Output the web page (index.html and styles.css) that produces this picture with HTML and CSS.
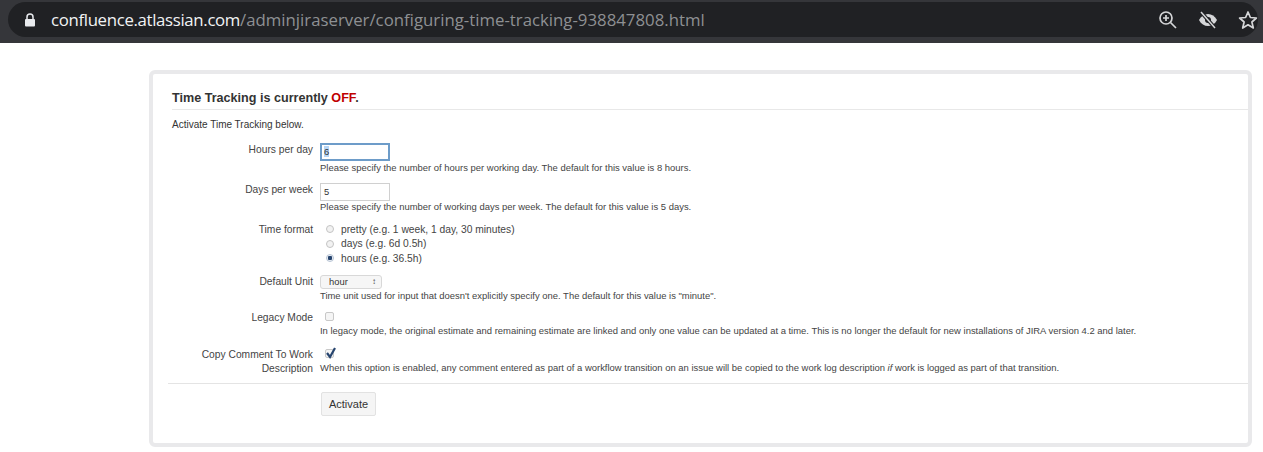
FILE: index.html
```html
<!DOCTYPE html>
<html lang="en">
<head>
    <meta charset="UTF-8">
    <title>Configuring time tracking</title>
    <link rel="stylesheet" href="styles.css">
</head>
<body>
    <div class="address-bar">
        <div class="address-pill">
            <svg class="lock" width="12" height="14" viewBox="0 0 12 14">
                <path d="M3 6V4a3 3 0 0 1 6 0v2" fill="none" stroke="#e8eaed" stroke-width="1.5"/>
                <rect x="1" y="6" width="10" height="7.5" rx="1" fill="#e8eaed"/>
            </svg>
            <span class="url"><span class="host">confluence.atlassian.com</span>/adminjiraserver/configuring-time-tracking-938847808.html</span>
            <div class="bar-icons">
                <svg width="20" height="20" viewBox="0 0 20 20" fill="none" stroke="#d5d6d8" stroke-width="1.7">
                    <circle cx="8" cy="8" r="6"/>
                    <path d="M12.5 12.5L18 18M8 5v6M5 8h6"/>
                </svg>
                <svg width="20" height="20" viewBox="0 0 20 20">
                    <path d="M1 10c2-4 5.500-6 9-6s7 2 9 6c-2 4-5.500 6-9 6s-7-2-9-6z" fill="#d5d6d8"/>
                    <circle cx="10" cy="10" r="3" fill="#202124"/>
                    <path d="M3 2l14 16" stroke="#202124" stroke-width="3.500"/>
                    <path d="M3 2l14 16" stroke="#d5d6d8" stroke-width="1.500"/>
                </svg>
                <svg width="20" height="20" viewBox="0 0 20 20">
                    <path d="M10 2l2.400 5.500 6 .5-4.500 4 1.400 6L10 14.800 4.700 18l1.400-6-4.500-4 6-.5z" fill="none" stroke="#d5d6d8" stroke-width="1.700" stroke-linejoin="round"/>
                </svg>
            </div>
        </div>
    </div>

    <div class="card">
        <h2 class="card-title">Time Tracking is currently <span class="off">OFF</span>.</h2>
        <p class="intro">Activate Time Tracking below.</p>

        <div class="field field-hours">
            <label class="field-label">Hours per day</label>
            <div class="field-body">
                <div class="text-input focused"><span class="selected">6</span></div>
                <div class="hint">Please specify the number of hours per working day. The default for this value is 8 hours.</div>
            </div>
        </div>

        <div class="field field-days">
            <label class="field-label">Days per week</label>
            <div class="field-body">
                <div class="text-input">5</div>
                <div class="hint">Please specify the number of working days per week. The default for this value is 5 days.</div>
            </div>
        </div>

        <div class="field field-format">
            <label class="field-label">Time format</label>
            <div class="field-body">
                <div class="radio-row"><span class="radio"></span>pretty (e.g. 1 week, 1 day, 30 minutes)</div>
                <div class="radio-row"><span class="radio"></span>days (e.g. 6d 0.5h)</div>
                <div class="radio-row"><span class="radio checked"></span>hours (e.g. 36.5h)</div>
            </div>
        </div>

        <div class="field field-unit">
            <label class="field-label">Default Unit</label>
            <div class="field-body">
                <div class="select">hour<span class="select-arrows">&#8597;</span></div>
                <div class="hint">Time unit used for input that doesn't explicitly specify one. The default for this value is "minute".</div>
            </div>
        </div>

        <div class="field field-legacy">
            <label class="field-label">Legacy Mode</label>
            <div class="field-body">
                <span class="checkbox"></span>
                <div class="hint">In legacy mode, the original estimate and remaining estimate are linked and only one value can be updated at a time. This is no longer the default for new installations of JIRA version 4.2 and later.</div>
            </div>
        </div>

        <div class="field field-copy">
            <label class="field-label">Copy Comment To Work Description</label>
            <div class="field-body">
                <span class="checkbox checked">
                    <svg width="12" height="12" viewBox="0 0 12 12">
                        <path d="M2 6l3 4 5-9" fill="none" stroke="#27456f" stroke-width="2.200"/>
                    </svg>
                </span>
                <div class="hint">When this option is enabled, any comment entered as part of a workflow transition on an issue will be copied to the work log description <em>if</em> work is logged as part of that transition.</div>
            </div>
        </div>

        <div class="actions">
            <button class="button">Activate</button>
        </div>
    </div>
</body>
</html>
```

FILE: styles.css
```css
* {
    box-sizing: border-box;
}
body {
    margin: 0;
    background-color: #ffffff;
    font-family: "Liberation Sans", Arial, sans-serif;
    color: #333333;
}
.address-bar {
    height: 43px;
    padding: 2px 5px 6px 8px;
    background-color: #35363a;
}
.address-pill {
    display: flex;
    align-items: center;
    height: 35px;
    padding-left: 16px;
    border-radius: 18px;
    background-color: #202124;
}
.lock {
    flex: none;
    margin-right: 15px;
}
.url {
    font-family: "Open Sans", sans-serif;
    font-size: 16.8px;
    color: #8e9093;
    white-space: nowrap;
}
.host {
    color: #f1f3f4;
    letter-spacing: -0.33px;
}
.bar-icons {
    display: flex;
    gap: 20px;
    margin-left: auto;
}
.card {
    margin: 27px 11px 0 149px;
    height: 377px;
    padding: 17px 0 0 19px;
    border: 4px solid #e9e9eb;
    border-radius: 6px;
}
.card-title {
    margin: 0;
    padding-bottom: 3px;
    border-bottom: 1px solid #e8e8e8;
    font-size: 12.6px;
    line-height: 15px;
    color: #333333;
}
.off {
    color: #c00000;
}
.intro {
    margin: 9px 0 0;
    font-size: 10px;
    line-height: 12px;
}
.field {
    display: grid;
    grid-template-columns: 141px 1fr;
    column-gap: 7px;
    font-size: 10.25px;
}
.field-label {
    text-align: right;
    line-height: 14px;
    color: #444444;
}
.hint {
    font-size: 9.45px;
    line-height: 12px;
    color: #444444;
}
.text-input {
    width: 70px;
    height: 18px;
    padding: 0 3px;
    border: 1px solid #d0d0d0;
    font-size: 9.4px;
    line-height: 16px;
    color: #333333;
}
.text-input.focused {
    padding: 0 2px;
    border: 2px solid #6d9cc9;
    line-height: 14px;
}
.selected {
    background-color: #b5d5f5;
}
.field-hours .hint {
    margin-top: 1px;
}
.radio-row {
    display: flex;
    align-items: center;
    height: 14.500px;
    padding-left: 6px;
    color: #444444;
}
.radio {
    width: 8px;
    height: 8px;
    margin-right: 7px;
    border: 1px solid #c4c4c4;
    border-radius: 50%;
    background-color: #f2f2f2;
}
.radio.checked {
    border-color: #b8c4d4;
    background: radial-gradient(circle, #27456f 0 2px, #ecf0f5 2.500px);
}
.select {
    display: flex;
    justify-content: space-between;
    align-items: center;
    width: 62px;
    height: 14px;
    padding: 0 5px 0 8px;
    border: 1px solid #d8d8d8;
    border-radius: 3px;
    background-color: #f6f6f6;
    font-size: 9.4px;
    color: #333333;
}
.select-arrows {
    font-size: 8px;
    color: #444444;
}
.checkbox {
    display: block;
    position: relative;
    width: 9px;
    height: 9px;
    margin: 1px 0 0 5px;
    border: 1px solid #c8c8c8;
    border-radius: 2px;
    background-color: #f5f5f5;
}
.checkbox svg {
    position: absolute;
    top: -3px;
    left: -1px;
}
.field-hours {
    margin-top: 12px;
}
.field-days {
    margin-top: 9px;
}
.field-format {
    margin-top: 9px;
}
.field-format .field-label {
    padding-top: 1px;
}
.field-unit {
    margin-top: 9px;
}
.field-unit .hint {
    margin-top: 1px;
}
.field-legacy {
    margin-top: 9px;
}
.field-legacy .hint {
    margin-top: 4px;
}
.field-copy {
    margin-top: 11px;
}
.field-copy .hint {
    margin-top: 4px;
}
.actions {
    margin: 7px 0 0 -4px;
    padding: 8px 0 0 153px;
    border-top: 1px solid #e4e4e4;
}
.button {
    width: 55px;
    height: 24px;
    padding: 0;
    border: 1px solid #e2e2e2;
    border-radius: 2px;
    background-color: #f5f5f5;
    font-family: inherit;
    font-size: 11px;
    color: #333333;
}
```
